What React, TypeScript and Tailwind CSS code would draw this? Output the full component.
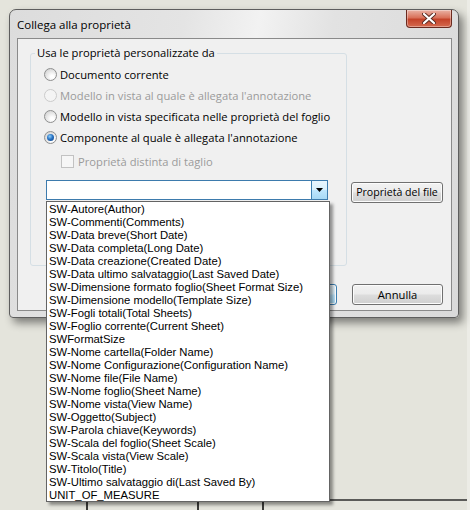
import clsx from 'clsx';

const properties = [
  'SW-Autore(Author)',
  'SW-Commenti(Comments)',
  'SW-Data breve(Short Date)',
  'SW-Data completa(Long Date)',
  'SW-Data creazione(Created Date)',
  'SW-Data ultimo salvataggio(Last Saved Date)',
  'SW-Dimensione formato foglio(Sheet Format Size)',
  'SW-Dimensione modello(Template Size)',
  'SW-Fogli totali(Total Sheets)',
  'SW-Foglio corrente(Current Sheet)',
  'SWFormatSize',
  'SW-Nome cartella(Folder Name)',
  'SW-Nome Configurazione(Configuration Name)',
  'SW-Nome file(File Name)',
  'SW-Nome foglio(Sheet Name)',
  'SW-Nome vista(View Name)',
  'SW-Oggetto(Subject)',
  'SW-Parola chiave(Keywords)',
  'SW-Scala del foglio(Sheet Scale)',
  'SW-Scala vista(View Scale)',
  'SW-Titolo(Title)',
  'SW-Ultimo salvataggio di(Last Saved By)',
  'UNIT_OF_MEASURE',
];

function Radio({ checked, disabled }: { checked?: boolean; disabled?: boolean }) {
  return (
    <span
      className={clsx(
        'flex h-[13px] w-[13px] shrink-0 items-center justify-center rounded-full border',
        disabled
          ? 'border-[#cbcbcb] bg-[#f4f4f4]'
          : 'border-[#8e8f8f] bg-[radial-gradient(circle_at_65%_70%,#ffffff_15%,#e2e2e2_60%,#c8c8c8_100%)]'
      )}
    >
      {checked && (
        <span className="h-[7px] w-[7px] rounded-full bg-[radial-gradient(circle_at_40%_35%,#8fd0fa_0%,#2a74c4_45%,#0b3c7e_100%)]" />
      )}
    </span>
  );
}

function RadioRow({ label, checked, disabled }: { label: string; checked?: boolean; disabled?: boolean }) {
  return (
    <div className="flex h-[21px] items-center gap-[3px] pl-[13px]">
      <Radio checked={checked} disabled={disabled} />
      <span className={disabled ? 'text-[#9b9b9b]' : 'text-black'}>{label}</span>
    </div>
  );
}

const btn =
  'flex h-[21px] items-center justify-center rounded-[3px] border border-[#707070] bg-[linear-gradient(to_bottom,#f2f2f2_0%,#ebebeb_48%,#dddddd_52%,#cfcfcf_100%)] shadow-[inset_0_0_0_1px_#fcfcfc] text-black';

const btnFocus =
  'flex h-[21px] items-center justify-center rounded-[3px] border border-[#3c7fb1] bg-[linear-gradient(to_bottom,#eaf6fd_0%,#d9f0fc_48%,#bee6fd_52%,#a7d9f5_100%)] shadow-[inset_0_0_0_1px_#fcfcfc] text-black';

export default function App() {
  return (
    <div className="relative h-[510px] w-[470px] overflow-hidden bg-[#e4e4dc] pl-[9px] pt-[9px] font-['Open_Sans',sans-serif] text-[11.2px] leading-none">
      {/* drawing grid behind the dialog */}
      <svg className="absolute left-0 top-0" width="470" height="510">
        <rect x="46" y="499" width="421" height="2" fill="#5a5a58" />
        <rect x="86" y="500" width="2" height="10" fill="#3c3c3a" />
        <rect x="197" y="500" width="2" height="10" fill="#3c3c3a" />
        <rect x="262" y="500" width="2" height="10" fill="#3c3c3a" />
        <rect x="467" y="0" width="3" height="510" fill="#ecece6" />
      </svg>

      {/* dialog window */}
      <div className="relative flex h-[309px] w-[450px] flex-col rounded-t-[7px] rounded-b-[4px] border border-[#5e5e5e] bg-[linear-gradient(100deg,#dcdcdc_0%,#e4e4e4_35%,#f2f2f2_50%,#e2e2e2_65%,#dadada_100%)] shadow-[4px_5px_8px_rgba(0,0,0,0.45)]">
        <div className="flex h-[28px] shrink-0 items-start justify-between">
          <span className="pl-[7px] pt-[9px] text-[11.5px] text-black">Collega alla proprietà</span>
          <div className="mr-[6px] flex h-[18px] w-[46px] items-center justify-center rounded-b-[4px] border border-t-0 border-[#6b2a1f] bg-[linear-gradient(to_bottom,#eab3a6_0%,#d9715a_45%,#c4432a_55%,#d56a4f_100%)] shadow-[inset_0_0_0_1px_rgba(255,255,255,0.35)]">
            <svg width="14" height="11" viewBox="0 0 14 11">
              <path d="M2 1 L12 10 M12 1 L2 10" stroke="#5a2b22" strokeWidth="4" strokeLinecap="round" />
              <path d="M2 1 L12 10 M12 1 L2 10" stroke="#ffffff" strokeWidth="2.2" strokeLinecap="round" />
            </svg>
          </div>
        </div>

        {/* client area */}
        <div className="ml-[7px] mr-[6px] flex h-[273px] flex-col border border-[#8a8a8a] bg-[#f0f0f0]">
          <div className="flex items-start pt-[6px]">
            <fieldset className="ml-[12px] h-[221px] w-[317px] rounded-[3px] border border-[#d5dfe5]">
              <legend className="ml-[4px] px-[2px] leading-[16px] text-black">Usa le proprietà personalizzate da</legend>
              <div className="flex flex-col pt-[3px]">
                <RadioRow label="Documento corrente" />
                <RadioRow label="Modello in vista al quale è allegata l'annotazione" disabled />
                <RadioRow label="Modello in vista specificata nelle proprietà del foglio" />
                <RadioRow label="Componente al quale è allegata l'annotazione" checked />
                <div className="mt-[3px] flex h-[21px] items-center gap-[4px] pl-[30px]">
                  <span className="h-[13px] w-[13px] border border-[#c2c2c2] bg-[#f6f6f6]" />
                  <span className="text-[#9b9b9b]">Proprietà distinta di taglio</span>
                </div>
                <div className="ml-[15px] mt-[8px] flex h-[20px] w-[282px] border border-[#3d7bad] bg-white">
                  <div className="flex-1" />
                  <div className="flex w-[16px] items-center justify-center border-l border-[#3c7fb1] bg-[linear-gradient(to_bottom,#eaf6fd_0%,#d9f0fc_48%,#bee6fd_52%,#a7d9f5_100%)]">
                    <svg width="7" height="4" viewBox="0 0 7 4">
                      <path d="M0 0 H7 L3.5 4 Z" fill="#000" />
                    </svg>
                  </div>
                </div>
              </div>
            </fieldset>
            <button className={clsx(btn, 'ml-[4px] mt-[137px] w-[92px] text-[10.6px]')}>Proprietà del file</button>
          </div>

          <div className="mt-[18px] flex justify-end gap-[15px] pr-[8px]">
            <button className={clsx(btnFocus, 'w-[91px]')}>OK</button>
            <button className={clsx(btn, 'w-[91px]')}>Annulla</button>
          </div>
        </div>
      </div>

      {/* open combo list */}
      <ul className="absolute left-[46px] top-[201px] z-10 flex h-[301px] w-[284px] flex-col border border-[#646464] bg-white py-[1px] font-['Liberation_Sans',Arial,sans-serif] text-[11.3px] shadow-[3px_3px_3px_rgba(0,0,0,0.4)]">
        {properties.map((p) => (
          <li key={p} className="flex h-[13px] shrink-0 items-center pl-[2px] leading-[13px] text-black">
            {p}
          </li>
        ))}
      </ul>
    </div>
  );
}
